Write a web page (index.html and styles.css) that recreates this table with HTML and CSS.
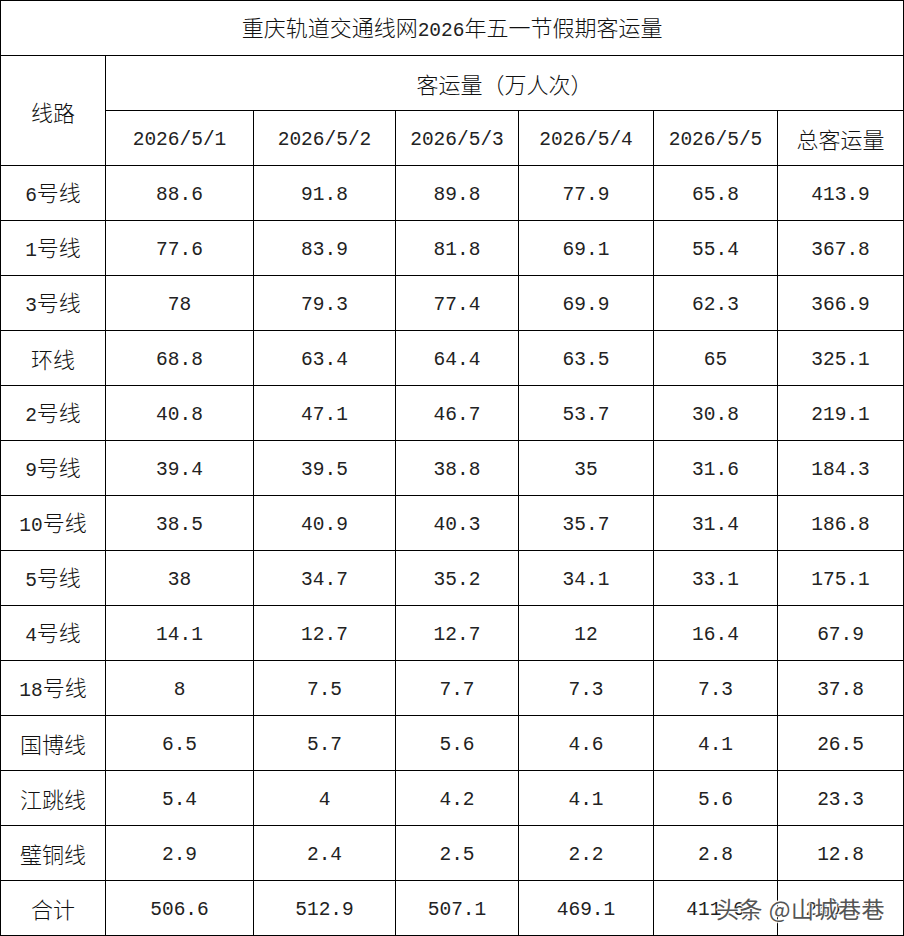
FILE: index.html
```html
<!DOCTYPE html>
<html lang="zh">
<head>
<meta charset="utf-8">
<title>重庆轨道交通线网2026年五一节假期客运量</title>
<link rel="stylesheet" href="styles.css">
</head>
<body>
<div class="page">
<table class="data">
<colgroup>
<col class="c0"><col class="c1"><col class="c2"><col class="c3"><col class="c4"><col class="c5"><col class="c6">
</colgroup>
<tr class="r"><td colspan="7">重庆轨道交通线网<span class="n">2026</span>年五一节假期客运量</td></tr>
<tr class="r"><td rowspan="2">线路</td><td colspan="6">客运量（万人次）</td></tr>
<tr class="r"><td class="n">2026/5/1</td><td class="n">2026/5/2</td><td class="n">2026/5/3</td><td class="n">2026/5/4</td><td class="n">2026/5/5</td><td>总客运量</td></tr>
<tr class="r"><td><span class="n">6</span>号线</td><td class="n">88.6</td><td class="n">91.8</td><td class="n">89.8</td><td class="n">77.9</td><td class="n">65.8</td><td class="n">413.9</td></tr>
<tr class="r"><td><span class="n">1</span>号线</td><td class="n">77.6</td><td class="n">83.9</td><td class="n">81.8</td><td class="n">69.1</td><td class="n">55.4</td><td class="n">367.8</td></tr>
<tr class="r"><td><span class="n">3</span>号线</td><td class="n">78</td><td class="n">79.3</td><td class="n">77.4</td><td class="n">69.9</td><td class="n">62.3</td><td class="n">366.9</td></tr>
<tr class="r"><td>环线</td><td class="n">68.8</td><td class="n">63.4</td><td class="n">64.4</td><td class="n">63.5</td><td class="n">65</td><td class="n">325.1</td></tr>
<tr class="r"><td><span class="n">2</span>号线</td><td class="n">40.8</td><td class="n">47.1</td><td class="n">46.7</td><td class="n">53.7</td><td class="n">30.8</td><td class="n">219.1</td></tr>
<tr class="r"><td><span class="n">9</span>号线</td><td class="n">39.4</td><td class="n">39.5</td><td class="n">38.8</td><td class="n">35</td><td class="n">31.6</td><td class="n">184.3</td></tr>
<tr class="r"><td><span class="n">10</span>号线</td><td class="n">38.5</td><td class="n">40.9</td><td class="n">40.3</td><td class="n">35.7</td><td class="n">31.4</td><td class="n">186.8</td></tr>
<tr class="r"><td><span class="n">5</span>号线</td><td class="n">38</td><td class="n">34.7</td><td class="n">35.2</td><td class="n">34.1</td><td class="n">33.1</td><td class="n">175.1</td></tr>
<tr class="r"><td><span class="n">4</span>号线</td><td class="n">14.1</td><td class="n">12.7</td><td class="n">12.7</td><td class="n">12</td><td class="n">16.4</td><td class="n">67.9</td></tr>
<tr class="r"><td><span class="n">18</span>号线</td><td class="n">8</td><td class="n">7.5</td><td class="n">7.7</td><td class="n">7.3</td><td class="n">7.3</td><td class="n">37.8</td></tr>
<tr class="r"><td>国博线</td><td class="n">6.5</td><td class="n">5.7</td><td class="n">5.6</td><td class="n">4.6</td><td class="n">4.1</td><td class="n">26.5</td></tr>
<tr class="r"><td>江跳线</td><td class="n">5.4</td><td class="n">4</td><td class="n">4.2</td><td class="n">4.1</td><td class="n">5.6</td><td class="n">23.3</td></tr>
<tr class="r"><td>璧铜线</td><td class="n">2.9</td><td class="n">2.4</td><td class="n">2.5</td><td class="n">2.2</td><td class="n">2.8</td><td class="n">12.8</td></tr>
<tr class="r"><td>合计</td><td class="n">506.6</td><td class="n">512.9</td><td class="n">507.1</td><td class="n">469.1</td><td class="n">411.6</td><td class="n">2407.3</td></tr>
</table>
<div class="mark">头条 @山城巷巷</div>
</div>
</body>
</html>
```
FILE: styles.css
```css
html, body {
  margin: 0;
  padding: 0;
  background: #fff;
}
.page {
  position: relative;
  width: 904px;
  height: 936px;
  overflow: hidden;
}
.data {
  border-collapse: collapse;
  table-layout: fixed;
  width: 903px;
  font-family: "Noto Sans CJK SC", sans-serif;
  font-weight: 300;
  font-size: 22px;
  color: #111;
}
.c0 { width: 105px; }
.c1 { width: 148px; }
.c2 { width: 142px; }
.c3 { width: 123px; }
.c4 { width: 135px; }
.c5 { width: 124px; }
.c6 { width: 126px; }
.r { height: 55px; }
.data td {
  border: 1.5px solid #000;
  padding: 0;
  text-align: center;
  vertical-align: middle;
  line-height: 24px;
  white-space: nowrap;
}
.data td.n {
  padding-top: 4px;
}
.n {
  font-family: "Liberation Mono", monospace;
  font-weight: 400;
  font-size: 19.5px;
  color: #222;
}
.mark {
  position: absolute;
  left: 716px;
  top: 893px;
  font-family: "Noto Sans CJK SC", sans-serif;
  font-size: 23px;
  letter-spacing: 0.5px;
  line-height: 30px;
  color: #555;
  text-shadow: 0 0 2px #fff, 0 0 2px #fff, 1px 1px 1px #fff, -1px -1px 1px #fff;
  white-space: nowrap;
}
```
